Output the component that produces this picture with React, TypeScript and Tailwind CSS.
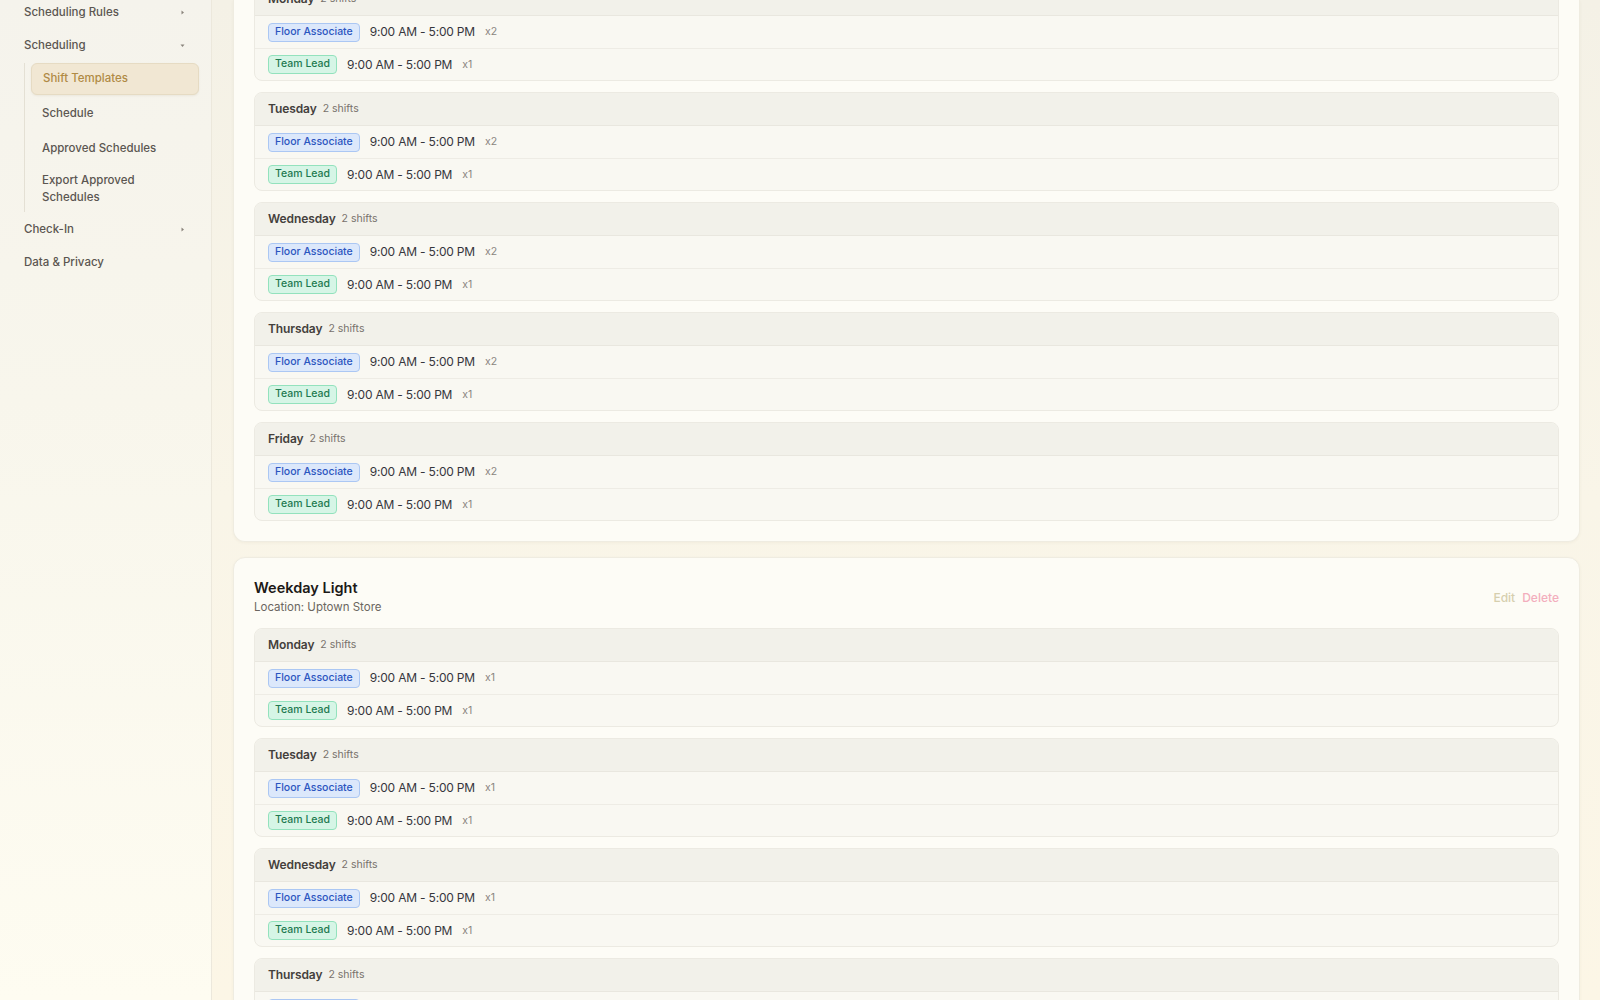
import React from "react";

type Shift = { role: "Floor Associate" | "Team Lead"; time: string; count: number };
type Day = { name: string; shifts: Shift[] };

const week = (floor: number): Day[] =>
	["Monday", "Tuesday", "Wednesday", "Thursday", "Friday"].map((name) => ({
		name,
		shifts: [
			{ role: "Floor Associate", time: "9:00 AM - 5:00 PM", count: floor },
			{ role: "Team Lead", time: "9:00 AM - 5:00 PM", count: 1 },
		],
	}));

const RoleBadge = ({ role }: { role: Shift["role"] }) => {
	const tone =
		role === "Team Lead"
			? "bg-[#d6f5e6] border-[#93e2bd] text-[#1e7a50]"
			: "bg-[#dce8fb] border-[#abc7f3] text-[#2b55c0]";
	return (
		<span className={`inline-flex items-center h-[19px] px-[6px] rounded-[4px] border text-[10.5px] font-medium leading-none ${tone}`}>
			{role}
		</span>
	);
};

const DayBlock = ({ day }: { day: Day }) => (
	<div className="rounded-lg border border-[#eceae2] bg-[#f9f8f2] overflow-hidden">
		<div className="h-[33px] flex items-center gap-[6px] px-[13px] bg-[#f2f1ea] border-b border-[#e9e7df]">
			<span className="text-[12px] font-semibold text-[#44403c] tracking-[-0.1px]">{day.name}</span>
			<span className="text-[10.5px] text-[#78716c]">{day.shifts.length} shifts</span>
		</div>
		{day.shifts.map((s, i) => (
			<div
				key={i}
				className={`h-[32px] flex items-center gap-[10px] px-[13px] ${i > 0 ? "border-t border-[#eeece5]" : ""}`}
			>
				<RoleBadge role={s.role} />
				<span className="text-[12px] tracking-[-0.2px] text-[#36363c]">{s.time}</span>
				<span className="text-[10.5px] text-[#8a8580]">x{s.count}</span>
			</div>
		))}
	</div>
);

const TemplateCard = ({
	title,
	location,
	days,
	clipped,
}: {
	title?: string;
	location?: string;
	days: Day[];
	clipped?: boolean;
}) => (
	<section
		className={`bg-[#fdfcf6] border border-[#efece1] shadow-[0_1px_3px_rgba(120,100,60,0.06)] px-5 pb-5 ${
			clipped ? "rounded-b-xl border-t-0" : "rounded-xl pt-5"
		}`}
	>
		{title && (
			<div className="flex items-start justify-between mb-[12px]">
				<div>
					<h2 className="text-[14.5px] font-semibold text-[#1c1917] leading-[20px]">{title}</h2>
					<p className="text-[11.5px] text-[#6b6660] leading-[18px]">Location: {location}</p>
				</div>
				<div className="flex gap-[7px] text-[12px] mt-[11px] font-medium">
					<button className="text-[#d6cfae]">Edit</button>
					<button className="text-[#f3aebd]">Delete</button>
				</div>
			</div>
		)}
		<div className={`flex flex-col gap-[11px] ${clipped ? "-mt-[18px]" : ""}`}>
			{days.map((d) => (
				<DayBlock key={d.name} day={d} />
			))}
		</div>
	</section>
);

// tiny disclosure triangle next to collapsible groups
const Caret = ({ open }: { open?: boolean }) => (
	<svg width="5" height="5" viewBox="0 0 5 5" className="mr-[2px] text-[#8a847c]" fill="currentColor">
		{open ? <path d="M0.5 1.5h4L2.5 4z" /> : <path d="M1.5 0.5v4L4 2.5z" />}
	</svg>
);

const NavItem = ({ label, caret }: { label: string; caret?: "right" | "down" }) => (
	<div className="h-[33px] flex items-center justify-between px-3 text-[11.5px] font-medium text-[#5b5651]">
		<span>{label}</span>
		{caret && <Caret open={caret === "down"} />}
	</div>
);

const subItem = "h-[32px] flex items-center px-[11px] text-[11.5px] font-medium text-[#5b5651]";

export default function App() {
	return (
		<div className="h-screen w-full overflow-hidden flex bg-[#f9f5e8] font-['Inter',sans-serif]">
			<aside className="w-[212px] shrink-0 border-r border-[#ece8dc] bg-[linear-gradient(180deg,#f5f3ec_0%,#f8f6ec_40%,#fefcf1_100%)] px-3">
				<nav className="-mt-[4px] flex flex-col">
					<NavItem label="Scheduling Rules" caret="right" />
					<NavItem label="Scheduling" caret="down" />
					<div className="ml-3 border-l border-[#e4e0d4] pl-[6px] mt-[1px] mb-[1px] flex flex-col gap-[3px]">
						<div className="h-[32px] flex items-center px-[11px] rounded-md bg-[#f1e7d3] border border-[#e6dbc3] shadow-[0_1px_2px_rgba(120,90,40,0.08)] text-[11.5px] font-medium text-[#b08a45]">
							Shift Templates
						</div>
						<div className={subItem}>Schedule</div>
						<div className={subItem}>Approved Schedules</div>
						<div className="pt-[4px] pb-[7px] px-[11px] text-[11.5px] leading-[16.5px] font-medium text-[#5b5651]">
							Export Approved
							<br />
							Schedules
						</div>
					</div>
					<NavItem label="Check-In" caret="right" />
					<NavItem label="Data & Privacy" />
				</nav>
			</aside>
			<main className="flex-1 pl-[21px] pr-5 bg-[linear-gradient(180deg,#f4f1e6_0%,#f9f5e8_50%,#fcf6e6_100%)]">
				<div className="flex flex-col gap-[15px]">
					<TemplateCard clipped days={week(2)} />
					<TemplateCard title="Weekday Light" location="Uptown Store" days={week(1)} />
				</div>
			</main>
		</div>
	);
}
